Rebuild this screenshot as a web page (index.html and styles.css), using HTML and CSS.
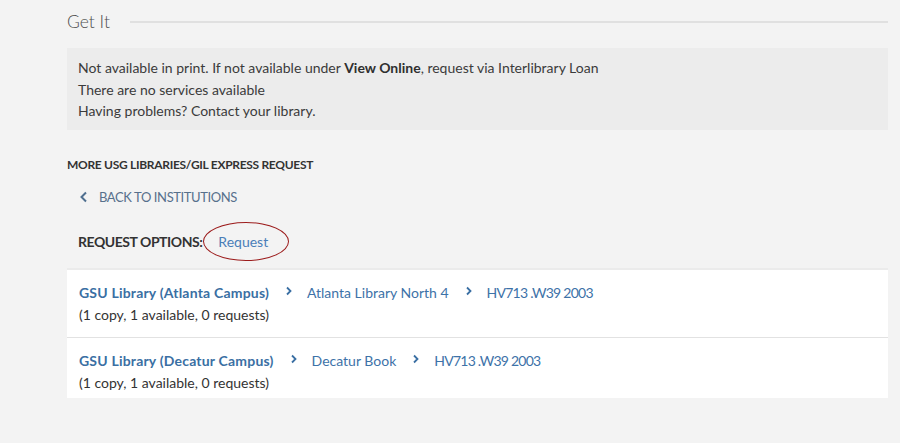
FILE: index.html
```html
<!DOCTYPE html>
<html lang="en">
<head>
<meta charset="utf-8">
<title>Get It</title>
<link rel="stylesheet" href="styles.css">
</head>
<body>
<main class="panel">
  <div class="section-head">
    <h2 class="section-title">Get It</h2>
    <span class="section-rule"></span>
  </div>

  <div class="notice">
    <p>Not available in print. If not available under <b>View Online</b>, request via Interlibrary Loan</p>
    <p>There are no services available</p>
    <p>Having problems? Contact your library.</p>
  </div>

  <h3 class="sub-title">MORE USG LIBRARIES/GIL EXPRESS REQUEST</h3>

  <a class="back-link" href="#">
    <svg class="back-icon" width="10" height="12" viewBox="0 0 10 12"><path d="M7 1.5 L2.5 6 L7 10.5" fill="none" stroke="#4f6f8f" stroke-width="2"/></svg>
    <span>BACK TO INSTITUTIONS</span>
  </a>

  <div class="req-options">
    <span class="req-label">REQUEST OPTIONS:</span>
    <a class="req-link" href="#">Request</a>
  </div>

  <ul class="holdings">
    <li class="holding">
      <div class="crumbs">
        <a class="lib" href="#">GSU Library (Atlanta Campus)</a>
        <svg class="chev" width="8" height="10" viewBox="0 0 8 10"><path d="M2 1.5 L5.5 5 L2 8.5" fill="none" stroke="#3a6fa3" stroke-width="1.8"/></svg>
        <a class="loc" href="#">Atlanta Library North 4</a>
        <svg class="chev" width="8" height="10" viewBox="0 0 8 10"><path d="M2 1.5 L5.5 5 L2 8.5" fill="none" stroke="#3a6fa3" stroke-width="1.8"/></svg>
        <a class="loc call" href="#">HV713 .W39 2003</a>
      </div>
      <div class="avail">(1 copy, 1 available, 0 requests)</div>
    </li>
    <li class="holding">
      <div class="crumbs">
        <a class="lib" href="#">GSU Library (Decatur Campus)</a>
        <svg class="chev" width="8" height="10" viewBox="0 0 8 10"><path d="M2 1.5 L5.5 5 L2 8.5" fill="none" stroke="#3a6fa3" stroke-width="1.8"/></svg>
        <a class="loc" href="#">Decatur Book</a>
        <svg class="chev" width="8" height="10" viewBox="0 0 8 10"><path d="M2 1.5 L5.5 5 L2 8.5" fill="none" stroke="#3a6fa3" stroke-width="1.8"/></svg>
        <a class="loc call" href="#">HV713 .W39 2003</a>
      </div>
      <div class="avail">(1 copy, 1 available, 0 requests)</div>
    </li>
  </ul>
</main>
</body>
</html>
```

FILE: styles.css
```css
html, body {
  margin: 0;
  padding: 0;
  background: #f3f3f3;
}
body {
  font-family: "Source Sans Pro", Lato, "Noto Sans", sans-serif;
  font-size: 14px;
  color: #3b3b3b;
}
.panel {
  margin: 0 12px 0 67px;
  padding-top: 10px;
}
.section-head {
  display: flex;
  align-items: center;
  gap: 20px;
  height: 24px;
}
.section-title {
  margin: 0;
  font-size: 17.5px;
  font-weight: 300;
  color: #4f4f4f;
  line-height: 24px;
}
.section-rule {
  flex: 1;
  height: 2px;
  background: #e0e0e0;
}
.notice {
  margin-top: 14px;
  background: #ececec;
  padding: 9px 11px 8px;
}
.notice p {
  margin: 0;
  line-height: 21.5px;
}
.notice b {
  font-weight: 700;
  color: #2f2f2f;
}
.sub-title {
  margin: 26px 0 0;
  font-size: 12px;
  font-weight: 700;
  letter-spacing: -0.3px;
  color: #333;
  line-height: 18px;
}
.back-link {
  display: flex;
  align-items: center;
  gap: 10px;
  margin: 14px 0 0 12px;
  color: #57708c;
  text-decoration: none;
  font-size: 13px;
  letter-spacing: -0.4px;
  line-height: 18px;
}
.back-icon {
  display: block;
}
.req-options {
  display: flex;
  align-items: center;
  margin: 17px 0 0 11px;
  height: 38px;
}
.req-label {
  font-weight: 700;
  font-size: 14px;
  letter-spacing: -0.45px;
  color: #333;
}
.req-link {
  position: relative;
  margin-left: 16px;
  color: #4a7eb8;
  text-decoration: none;
}
.req-link::after {
  content: "";
  position: absolute;
  left: -15px;
  top: -11px;
  width: 84px;
  height: 37px;
  border: 1.3px solid #9c1c1c;
  border-radius: 50%;
}
.holdings {
  list-style: none;
  margin: 7px 0 0;
  padding: 0;
  background: #fff;
  border-top: 2px solid #ebebeb;
}
.holding {
  padding: 12px 12px 11px;
  line-height: 22px;
}
.holding + .holding {
  border-top: 1px solid #e2e2e2;
}
.holding:last-child {
  padding-bottom: 4px;
}
.crumbs {
  display: flex;
  align-items: center;
}
.crumbs a {
  text-decoration: none;
  color: #3a6fa3;
}
.crumbs .lib {
  font-weight: 700;
  letter-spacing: 0.2px;
}
.crumbs .loc {
  font-weight: 400;
  color: #3d72a8;
}
.crumbs .call {
  letter-spacing: -0.75px;
}
.chev {
  display: block;
  margin: -4px 14px 0 16px;
}
.avail {
  color: #333;
}
```
